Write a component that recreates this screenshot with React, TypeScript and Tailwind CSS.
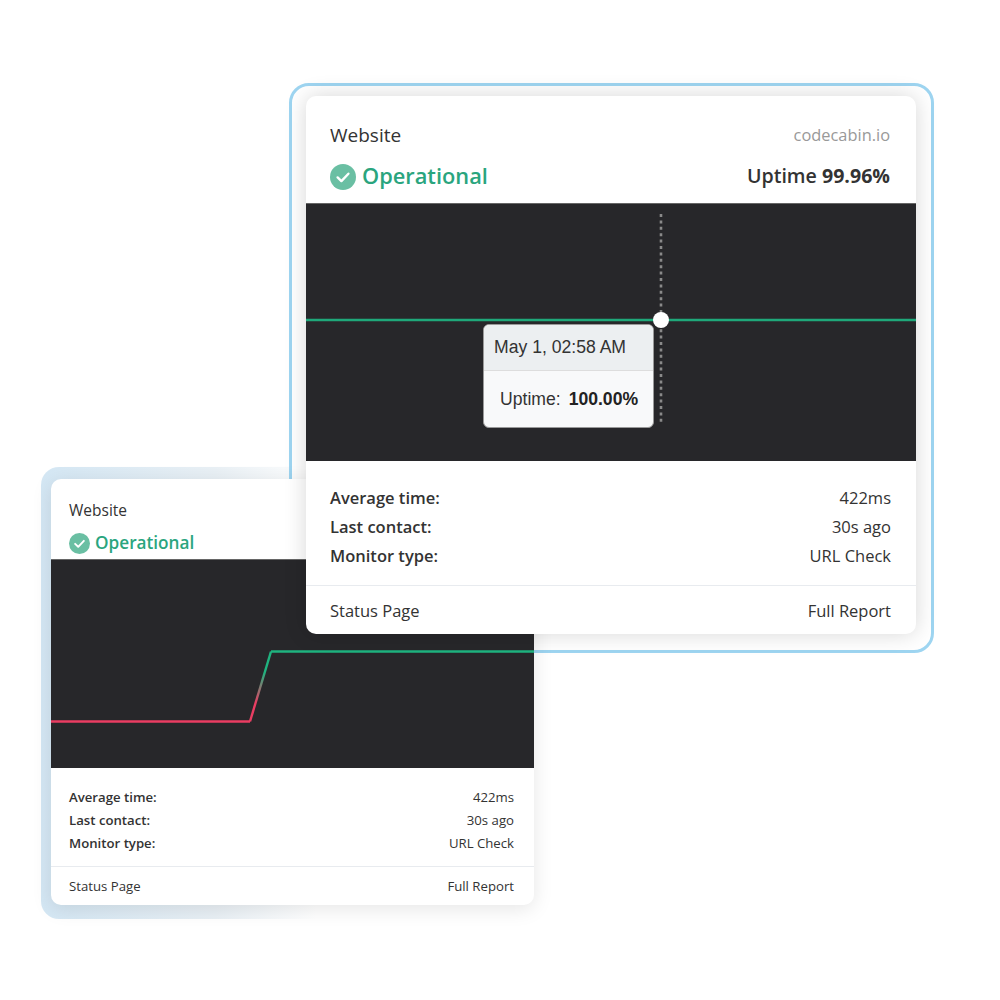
import React from "react";

function Check({ className }: { className: string }) {
  return (
    <svg viewBox="0 0 26 26" className={className}>
      <circle cx="13" cy="13" r="13" fill="#6abfa3" />
      <path d="M7.6 13.4l3.8 3.7 7-7.4" fill="none" stroke="#fff" strokeWidth="2.4" strokeLinecap="round" strokeLinejoin="round" />
    </svg>
  );
}

function Row({ label, value }: { label: string; value: string }) {
  return (
    <div className="flex justify-between">
      <span className="font-semibold">{label}</span>
      <span>{value}</span>
    </div>
  );
}

export default function App() {
  return (
    <div className="relative w-[1000px] h-[1000px] bg-white overflow-hidden font-['Open_Sans',sans-serif] text-[#333]">
      {/* small frame band */}
      <div className="absolute left-[41px] top-[467px] w-[500px] h-[452px] rounded-[18px] bg-linear-to-r from-[#d4e7f4] via-[#e9f0f5] via-35% to-white to-55%" />
      {/* big frame border */}
      <div className="absolute left-[289px] top-[83px] w-[645px] h-[570px] rounded-[20px] border-[3px] border-[#9ed5f1] bg-white" />
      {/* small card */}
      <div className="absolute left-[51px] top-[479px] w-[483px] h-[426px] rounded-[10px] bg-white shadow-[0_4px_20px_rgba(0,0,0,0.1)] overflow-hidden flex flex-col">
        <div className="h-[80px] shrink-0 px-[18px] pt-[21px] flex flex-col">
          <div className="text-[15.5px] leading-[20px]">Website</div>
          <div className="mt-[10px] flex items-center gap-[5px]">
            <Check className="w-[21px] h-[21px]" />
            <span className="text-[17.2px] leading-[26px] font-semibold text-[#2aa57e]">Operational</span>
          </div>
        </div>
        <div className="h-[209px] shrink-0 bg-[#27272a] border-t border-[#666]">
          <svg width="483" height="209" viewBox="0 0 483 209" className="block">
            <defs>
              <linearGradient id="slope" gradientUnits="userSpaceOnUse" x1="0" y1="91" x2="0" y2="161">
                <stop offset="0" stopColor="#1fb37f" />
                <stop offset="0.3" stopColor="#1fb37f" />
                <stop offset="0.75" stopColor="#ea3d62" />
                <stop offset="1" stopColor="#ea3d62" />
              </linearGradient>
            </defs>
            <path d="M0 161.5H199" stroke="#ea3d62" strokeWidth="2.4" fill="none" />
            <path d="M199 161.5L220 91.5" stroke="url(#slope)" strokeWidth="2.4" fill="none" />
            <path d="M220 91.5H483" stroke="#1fb37f" strokeWidth="2.4" fill="none" />
          </svg>
        </div>
        <div className="pl-[18px] pr-[20px] pt-[18px] pb-[11px] text-[13.2px] leading-[23px]">
          <Row label="Average time:" value="422ms" />
          <Row label="Last contact:" value="30s ago" />
          <Row label="Monitor type:" value="URL Check" />
        </div>
        <div className="h-[39px] border-t border-[#e8ebef] pl-[18px] pr-[20px] pt-[2px] flex items-center justify-between text-[13.2px]">
          <span>Status Page</span>
          <span>Full Report</span>
        </div>
      </div>
      {/* big card */}
      <div className="absolute left-[306px] top-[96px] w-[610px] h-[538px] rounded-[10px] bg-white shadow-[0_0_22px_rgba(0,0,0,0.16)] overflow-hidden flex flex-col">
        <div className="h-[107px] shrink-0 pl-[24px] pr-[26px] pt-[26px]">
          <div className="flex justify-between items-center leading-[26px]">
            <span className="text-[19px]">Website</span>
            <span className="text-[16.4px] text-[#999]">codecabin.io</span>
          </div>
          <div className="mt-[13px] flex justify-between items-center">
            <div className="flex items-center gap-[6px]">
              <Check className="w-[26px] h-[26px]" />
              <span className="text-[21.8px] leading-[32px] font-semibold text-[#2aa57e] -translate-y-px">Operational</span>
            </div>
            <span className="text-[19.6px] font-semibold -translate-y-px">
              Uptime <b className="font-bold">99.96%</b>
            </span>
          </div>
        </div>
        <div className="relative h-[258px] shrink-0 bg-[#27272a] border-t border-[#666]">
          <svg width="610" height="257" viewBox="0 0 610 257" className="block">
            <path d="M0 116H610" stroke="#1fa87a" strokeWidth="2.5" fill="none" />
            <path d="M355 10V219" stroke="#8a8a8a" strokeWidth="2.6" strokeDasharray="3 3.4" fill="none" />
            <circle cx="355" cy="116" r="8" fill="#fff" />
          </svg>
          <div className="absolute left-[177px] top-[120px] w-[171px] h-[104px] rounded-[6px] overflow-hidden bg-[#f8f9fa] border border-[#999] font-['Liberation_Sans',sans-serif] text-[17.6px] text-[#333]">
            <div className="h-[46px] bg-[#eceff1] border-b border-[#ddd] pl-[10px] flex items-center">May 1, 02:58 AM</div>
            <div className="h-[56px] pl-[16px] flex items-center gap-[8px]">
              <span>Uptime:</span>
              <b className="font-bold text-[#222]">100.00%</b>
            </div>
          </div>
        </div>
        <div className="pl-[24px] pr-[25px] pt-[22px] pb-[15px] text-[16.5px] leading-[29px]">
          <Row label="Average time:" value="422ms" />
          <Row label="Last contact:" value="30s ago" />
          <Row label="Monitor type:" value="URL Check" />
        </div>
        <div className="h-[49px] border-t border-[#e8ebef] pl-[24px] pr-[25px] pt-[2px] flex items-center justify-between text-[16.5px]">
          <span>Status Page</span>
          <span>Full Report</span>
        </div>
      </div>
    </div>
  );
}
